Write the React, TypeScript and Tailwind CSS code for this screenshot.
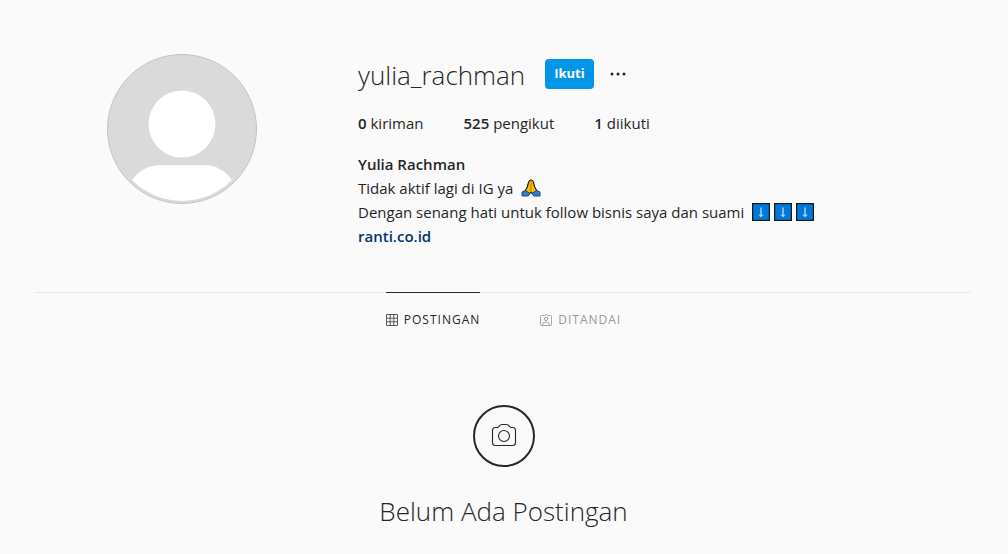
import React from 'react';

const stats = [
  { value: '0', label: 'kiriman' },
  { value: '525', label: 'pengikut' },
  { value: '1', label: 'diikuti' },
];

function Avatar() {
  return (
    <svg viewBox="0 0 150 150" className="size-[150px]" role="img" aria-label="Foto profil">
      <defs>
        <clipPath id="avatar-body">
          <circle cx="75" cy="71" r="76" />
        </clipPath>
      </defs>
      <circle cx="75" cy="75" r="74.5" fill="#dadada" stroke="#c4c4c4" />
      <circle cx="75" cy="70" r="33.5" fill="#fff" />
      <path d="M25 126C32 116 43 111 54 111H97C108 111 119 117 125 126C112 139 94 147 75 147S38 139 25 126Z" fill="#fff" clipPath="url(#avatar-body)" />
    </svg>
  );
}

function PrayEmoji() {
  return (
    <svg viewBox="0 0 20 18" className="h-[18px] w-5" role="img" aria-label="Terima kasih">
      <path d="M9.6 1C8 1 7.9 2 7.5 3.5L6.3 8L4 12L8 15.5L10 13L12 15.5L16 12L13.7 8L12.5 3.5C12.1 2 12 1 10.4 1Z" fill="#ffb900" stroke="#161616" strokeWidth="1.1" strokeLinejoin="round" />
      <path d="M10 1.5V12.5" stroke="#a66b10" strokeWidth=".8" />
      <path d="M4.6 11.5L1 13V17H7.2L9 14.6ZM15.4 11.5L19 13V17H12.8L11 14.6Z" fill="#2b82cf" stroke="#1c4a75" strokeWidth="1" strokeLinejoin="round" />
    </svg>
  );
}

function DownEmoji() {
  return (
    <svg viewBox="0 0 18 18" className="size-[18px]" role="img" aria-label="Panah ke bawah">
      <rect x=".5" y=".5" width="17" height="17" fill="#0078d7" stroke="#101820" strokeWidth="1.4" />
      <path d="M9 4.5V13.5M7 11.5L9 13.5L11 11.5" fill="none" stroke="#fff" strokeWidth="1" />
    </svg>
  );
}

function GridIcon() {
  return (
    <svg viewBox="0 0 12 12" className="size-3" fill="none" stroke="#4a4a4a" strokeWidth=".9" aria-hidden="true">
      <path d="M.5 .5H11.5V11.5H.5ZM4.2 .5V11.5M7.8 .5V11.5M.5 4.2H11.5M.5 7.8H11.5" />
    </svg>
  );
}

function TaggedIcon() {
  return (
    <svg viewBox="0 0 12 12" className="size-3" fill="none" stroke="#9a9a9a" strokeWidth=".9" aria-hidden="true">
      <path d="M1.5 1.5H4.3L6 .5L7.7 1.5H10.5Q11.5 1.5 11.5 2.5V10.5Q11.5 11.5 10.5 11.5H1.5Q.5 11.5 .5 10.5V2.5Q.5 1.5 1.5 1.5Z" />
      <circle cx="6" cy="5" r="1.7" />
      <path d="M2.8 11V10Q2.8 8.3 4.5 8.3H7.5Q9.2 8.3 9.2 10V11" />
    </svg>
  );
}

function CameraBadge() {
  return (
    <svg viewBox="0 0 62 62" className="size-[62px]" fill="none" stroke="#262626" aria-hidden="true">
      <circle cx="31" cy="31" r="30" strokeWidth="2" />
      <path d="M22.5 22.5H24C26.2 22.5 26.2 19.5 29 19.5H33.5C36.3 19.5 36.3 22.5 38.5 22.5H39.5Q42.5 22.5 42.5 25.5V37.5Q42.5 40.5 39.5 40.5H22.5Q19.5 40.5 19.5 37.5V25.5Q19.5 22.5 22.5 22.5Z" strokeWidth="1.1" />
      <circle cx="31" cy="31" r="5.5" strokeWidth="1.1" />
    </svg>
  );
}

export default function App() {
  return (
    <main className="min-h-screen bg-[#fafafa] font-['Open_Sans',sans-serif] text-[#262626]">
      <div className="mx-auto max-w-[1008px] pt-[54px] pr-[37px] pb-6 pl-9">
        <header className="flex">
          <div className="mr-[30px] flex w-[292px] shrink-0 justify-center">
            <Avatar />
          </div>
          <section className="min-w-0 flex-1">
            <div className="flex h-10 items-center">
              <h1 className="pt-[2px] text-[26px] leading-8 font-light">yulia_rachman</h1>
              <button type="button" className="ml-5 h-[30px] rounded bg-[#0095e9] px-[9px] text-[13px] font-bold text-white">Ikuti</button>
              <button type="button" aria-label="Opsi lainnya" className="ml-3 flex size-6 items-center justify-center">
                <svg viewBox="0 0 16 4" className="h-1 w-4" fill="#262626" aria-hidden="true">
                  <circle cx="2" cy="2" r="1.5" />
                  <circle cx="8" cy="2" r="1.5" />
                  <circle cx="14" cy="2" r="1.5" />
                </svg>
              </button>
            </div>
            <ul className="mt-[17px] flex gap-10 text-[15px] leading-6">
              {stats.map((stat) => (
                <li key={stat.label}>
                  <span className="font-semibold">{stat.value}</span> {stat.label}
                </li>
              ))}
            </ul>
            <div className="mt-[17px] text-[15px] leading-6">
              <h2 className="font-semibold">Yulia Rachman</h2>
              <p className="flex items-center gap-2">Tidak aktif lagi di IG ya <PrayEmoji /></p>
              <p className="flex items-center gap-2">
                Dengan senang hati untuk follow bisnis saya dan suami
                <span className="flex gap-1">
                  <DownEmoji />
                  <DownEmoji />
                  <DownEmoji />
                </span>
              </p>
              <a href="#ranti" className="block w-fit font-semibold text-[#003569]">ranti.co.id</a>
            </div>
          </section>
        </header>
        <nav className="mt-11 flex justify-center gap-[60px] border-t border-[#e6e6e6] text-xs font-medium tracking-[1px]">
          <a href="#postingan" aria-current="page" className="-mt-px flex h-[54px] items-center gap-[6px] border-t border-[#262626]">
            <GridIcon />
            <span>POSTINGAN</span>
          </a>
          <a href="#ditandai" className="-mt-px flex h-[54px] items-center gap-[6px] border-t border-transparent text-[#999999]">
            <TaggedIcon />
            <span>DITANDAI</span>
          </a>
        </nav>
        <section className="mt-[59px] flex flex-col items-center">
          <CameraBadge />
          <h2 className="mt-6 text-[26px] leading-10 font-light">Belum Ada Postingan</h2>
        </section>
      </div>
    </main>
  );
}
